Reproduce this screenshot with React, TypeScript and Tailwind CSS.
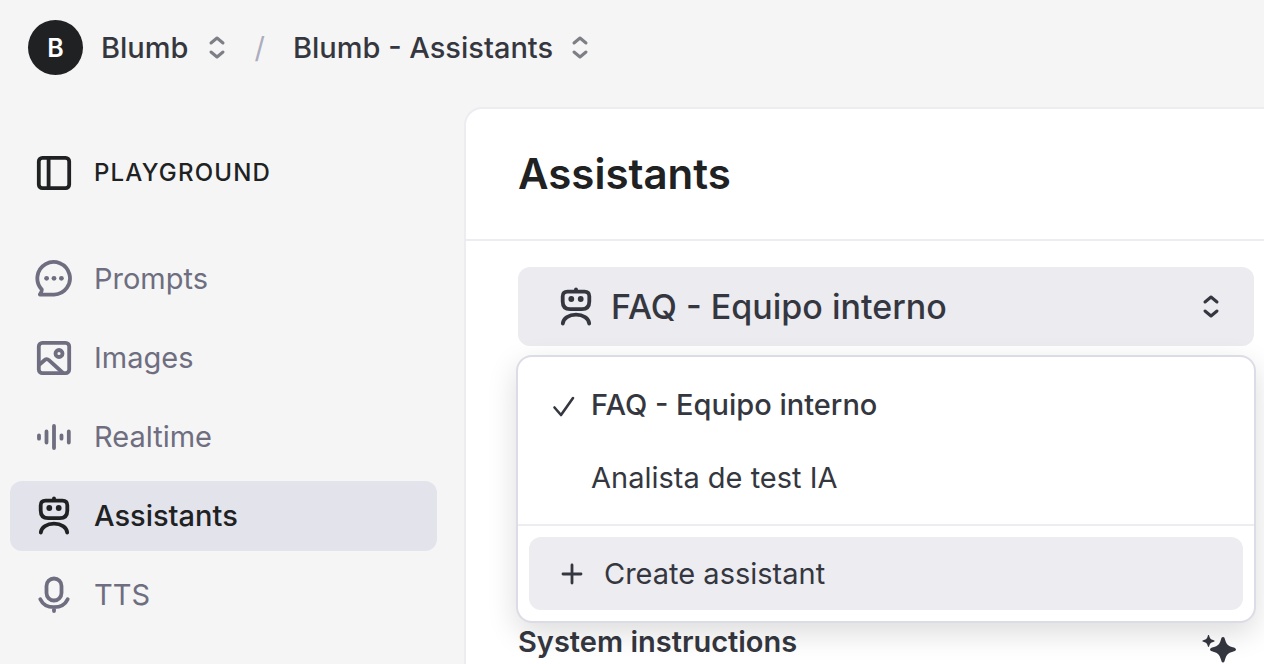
import { useState } from "react";
import type { ReactNode } from "react";

const assistants = ["FAQ - Equipo interno", "Analista de test IA"];

function Icon({ children }: { children: ReactNode }) {
  return (
    <svg
      viewBox="0 0 40 40"
      className="size-10 shrink-0"
      fill="none"
      stroke="currentColor"
      strokeWidth="3.8"
      strokeLinecap="round"
      strokeLinejoin="round"
      aria-hidden="true"
    >
      {children}
    </svg>
  );
}

function PanelIcon() {
  return (
    <Icon>
      <rect x="4.8" y="4.8" width="30.4" height="30.4" rx="3.6" />
      <path d="M14.6 5v30" />
    </Icon>
  );
}

function PromptsIcon() {
  return (
    <Icon>
      <path d="M20.2 35.6H6C5.3 35.6 8 33.600 7.800 30.500A16.300 16.300 0 1 1 20.200 35.600Z" />
      <g fill="currentColor" stroke="none">
        <circle cx="12.600" cy="19.300" r="2.400" />
        <circle cx="20" cy="19.300" r="2.400" />
        <circle cx="27.400" cy="19.300" r="2.400" />
      </g>
    </Icon>
  );
}

function ImagesIcon() {
  return (
    <Icon>
      <rect x="4.8" y="4.8" width="30.4" height="30.4" rx="3.6" />
      <circle cx="25" cy="15.500" r="3.500" />
      <path d="M5.5 26.500l5.200-4.500c1.400-1.200 2.900-1.100 4.200.1L28.500 34.500" />
    </Icon>
  );
}

function RealtimeIcon() {
  return (
    <Icon>
      <path d="M5 18.300v3.400M12.500 14.500v11M20 9v22M27.500 18.300v3.400M34.800 14.500v11" />
    </Icon>
  );
}

function RobotIcon() {
  return (
    <Icon>
      <path d="M20 2.300V4" />
      <path d="M11.500 4.600h17c3.200 0 4.800 1.700 4.800 4.700v5.200c0 5-2.800 7.700-7.500 7.700H14.200c-4.700 0-7.500-2.700-7.500-7.700V9.300c0-3 1.600-4.700 4.800-4.700Z" />
      <g fill="currentColor" stroke="none">
        <circle cx="15.300" cy="12" r="2.900" />
        <circle cx="24.700" cy="12" r="2.900" />
      </g>
      <path d="M6.800 36.500C7.300 31 13 27.700 20 27.700S32.700 31 33.200 36.500" />
    </Icon>
  );
}

function MicIcon() {
  return (
    <Icon>
      <rect x="12.500" y="3.500" width="15" height="22" rx="7.500" />
      <path d="M6.300 24.200C8.700 29.300 13.800 32.200 20 32.200s11.300-2.900 13.700-8M20 32.500V36" />
    </Icon>
  );
}

function Chevrons() {
  return (
    <svg
      viewBox="0 0 18 24"
      className="h-6 w-[18px] shrink-0"
      fill="none"
      stroke="currentColor"
      strokeWidth="3"
      strokeLinecap="round"
      strokeLinejoin="round"
      aria-hidden="true"
    >
      <path d="M3 7 9 2 15 7M3 16 9 21 15 16" />
    </svg>
  );
}

const navItems = [
  { label: "Prompts", icon: <PromptsIcon /> },
  { label: "Images", icon: <ImagesIcon /> },
  { label: "Realtime", icon: <RealtimeIcon /> },
  { label: "Assistants", icon: <RobotIcon />, active: true },
  { label: "TTS", icon: <MicIcon /> },
];

export default function App() {
  const [open, setOpen] = useState(true);
  const [selected, setSelected] = useState(assistants[0]);

  return (
    <div className="flex min-h-screen flex-col overflow-hidden bg-[#f5f5f5] font-['Inter',sans-serif] text-[29px] leading-9 text-[#353740]">
      {/* Breadcrumb */}
      <header className="flex items-center px-7 pt-5 pb-8 font-medium">
        <div className="flex size-[55px] items-center justify-center rounded-full bg-[#202123] text-[25px] font-semibold text-white">
          B
        </div>
        <button className="ml-[18px] flex items-center gap-5">
          Blumb
          <span className="text-[#7d7e86]"><Chevrons /></span>
        </button>
        <span className="mx-7 font-normal text-[#acacbe]">/</span>
        <button className="flex items-center gap-[18px]">
          Blumb - Assistants
          <span className="text-[#7d7e86]"><Chevrons /></span>
        </button>
      </header>

      <div className="flex flex-1">
        {/* Sidebar */}
        <aside className="w-[464px] shrink-0 pr-[27px] pl-[10px]">
          <div className="flex items-center gap-5 px-6 pt-[46px] pb-[51px] text-2xl font-medium tracking-wider text-[#202123]">
            <PanelIcon />
            PLAYGROUND
          </div>
          <nav className="flex flex-col gap-[9px]">
            {navItems.map((item) => (
              <a
                key={item.label}
                href="#"
                className={`flex h-[70px] items-center gap-5 rounded-xl px-6 ${
                  item.active ? "bg-[#e3e3eb] font-medium text-[#202123]" : "text-[#6e6e80]"
                }`}
              >
                {item.icon}
                {item.label}
              </a>
            ))}
          </nav>
        </aside>

        {/* Main panel */}
        <main className="min-w-0 flex-1 rounded-tl-[18px] border-t-2 border-l-2 border-[#ececf1] bg-white">
          <div className="border-b-2 border-[#ececf1] px-[52px] py-10">
            <h1 className="text-[42px] leading-[50px] font-semibold text-[#202123]">Assistants</h1>
          </div>

          <div className="pt-[26px] pr-[10px] pl-[52px]">
            <div className="relative">
              <button
                aria-haspopup="listbox"
                aria-expanded={open}
                onClick={() => setOpen(!open)}
                className="flex h-[79px] w-full items-center gap-[15px] rounded-xl bg-[#ebebf0] pr-[34px] pl-[38px] text-[34px] font-medium"
              >
                <RobotIcon />
                <span className="flex-1 text-left">{selected}</span>
                <Chevrons />
              </button>

              {/* Assistant menu */}
              {open && (
                <div className="absolute -inset-x-0.5 top-full z-10 mt-[9px] rounded-2xl border-2 border-[#dcdce6] bg-white shadow-[0_10px_30px_rgba(0,0,0,0.14)]">
                  <div role="listbox" aria-label="Assistants" className="border-b-2 border-[#ececf1] pt-[11px] pb-[10px]">
                    {assistants.map((name) => (
                      <button
                        key={name}
                        role="option"
                        aria-selected={name === selected}
                        onClick={() => setSelected(name)}
                        className={`flex h-[73px] w-full items-center gap-[15px] pl-[34px] ${name === selected ? "font-medium" : ""}`}
                      >
                        <svg
                          viewBox="0 0 24 24"
                          className={`size-6 ${name === selected ? "" : "invisible"}`}
                          fill="none"
                          stroke="currentColor"
                          strokeWidth="2.6"
                          strokeLinecap="round"
                          strokeLinejoin="round"
                          aria-hidden="true"
                        >
                          <path d="M2.5 14.500 9 22 21 5" />
                        </svg>
                        {name}
                      </button>
                    ))}
                  </div>
                  <div className="p-[11px]">
                    <button className="flex h-[73px] w-full items-center gap-5 rounded-xl bg-[#ececf1] pl-[31px]">
                      <svg
                        viewBox="0 0 24 24"
                        className="size-6"
                        fill="none"
                        stroke="currentColor"
                        strokeWidth="2.8"
                        strokeLinecap="round"
                        aria-hidden="true"
                      >
                        <path d="M12 3v18M3 12h18" />
                      </svg>
                      Create assistant
                    </button>
                  </div>
                </div>
              )}
            </div>

            <div className="flex items-start justify-between pt-[278px] pr-4">
              <h2 className="font-semibold">System instructions</h2>
              <button aria-label="Generate" className="pt-[11px]">
                <svg viewBox="0 0 36 30" className="h-[30px] w-9" fill="currentColor" aria-hidden="true">
                  <path d="M21 2c1.400 0 1.700 1.300 2.100 2.700 1.500 4.800 2.900 6.200 7.700 7.600 1.500.5 3.200.9 3.200 2.200s-1.700 1.700-3.200 2.200c-4.800 1.400-6.200 2.800-7.700 7.600-.4 1.400-.7 3.200-2.100 3.200s-1.700-1.800-2.100-3.200c-1.500-4.800-2.900-6.200-7.700-7.600-1.500-.5-3.200-.9-3.200-2.200s1.700-1.700 3.200-2.200c4.800-1.400 6.200-2.800 7.700-7.600C19.300 3.300 19.600 2 21 2Z" />
                  <path d="M6.500 0c.5 0 .6.500.8 1.200.7 2.400 1.400 3.100 3.800 3.800.7.200 1.400.4 1.400 1s-.7.800-1.400 1c-2.400.7-3.100 1.400-3.800 3.800-.2.700-.3 1.200-.8 1.200s-.6-.5-.8-1.200C5 8.400 4.300 7.700 1.900 7 1.200 6.800.5 6.600.5 6s.7-.8 1.400-1c2.400-.7 3.100-1.400 3.800-3.800.2-.7.300-1.200.8-1.200Z" />
                </svg>
              </button>
            </div>
          </div>
        </main>
      </div>
    </div>
  );
}
